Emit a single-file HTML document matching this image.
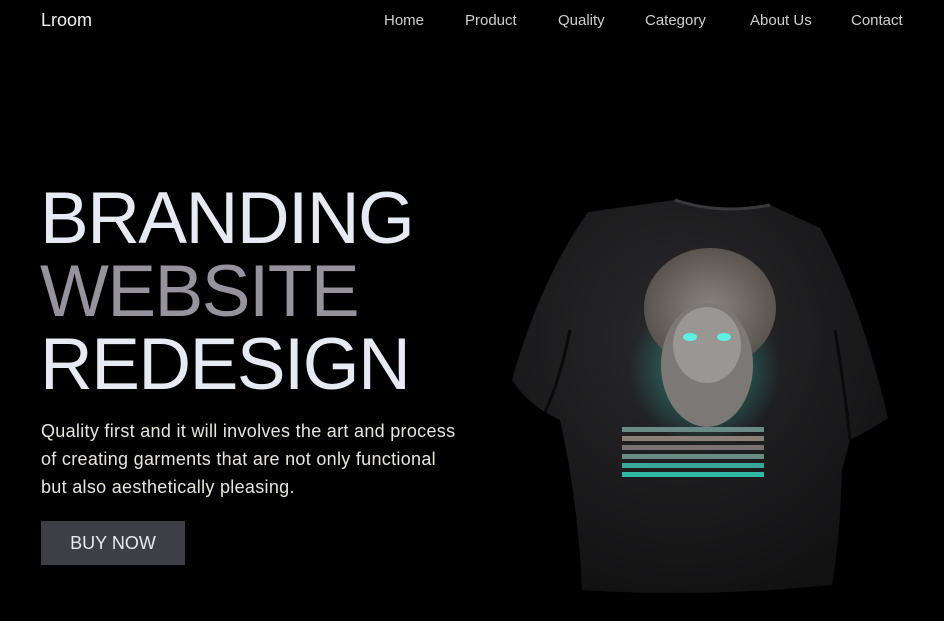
<!DOCTYPE html>
<html><head><meta charset="utf-8"><style>
*{margin:0;padding:0;box-sizing:border-box}
body{width:944px;height:621px;background:#000;overflow:hidden;position:relative;font-family:"Liberation Sans",sans-serif;color:#e4e8f0}
.logo{position:absolute;left:41px;top:10px;font-size:18px;color:#f0f0f0}
.nav{position:absolute;top:12px;font-size:15px;color:#d0d0d0}
h1{position:absolute;left:40px;top:182px;font-weight:normal;font-size:73px;line-height:73px;letter-spacing:-1.5px;color:#e6eaf2}
h1 .g{color:#96939c}
p{position:absolute;left:41px;top:417px;font-size:18px;line-height:28px;color:#e8e6dc;width:500px;letter-spacing:0.3px;white-space:nowrap}
.btn{position:absolute;left:41px;top:521px;width:144px;height:44px;background:#3e3e47;color:#e8e8ee;font-size:18px;text-align:center;line-height:44px}
</style></head><body>
<div class="logo">Lroom</div>
<div class="nav" style="left:384px">Home</div>
<div class="nav" style="left:465px">Product</div>
<div class="nav" style="left:558px">Quality</div>
<div class="nav" style="left:645px">Category</div>
<div class="nav" style="left:750px">About Us</div>
<div class="nav" style="left:851px">Contact</div>
<h1>BRANDING<br><span class="g">WEBSITE</span><br>REDESIGN</h1>
<p>Quality first and it will involves the art and process<br>of creating garments that are not only functional<br>but also aesthetically pleasing.</p>
<div class="btn">BUY NOW</div>
<svg style="position:absolute;left:0;top:0" width="944" height="621">
<defs>
<radialGradient id="sh" cx="0.45" cy="0.35" r="0.7"><stop offset="0" stop-color="#2a2a2c"/><stop offset="1" stop-color="#111112"/></radialGradient>
<radialGradient id="hair" cx="0.5" cy="0.5" r="0.5"><stop offset="0" stop-color="#8a8480"/><stop offset="1" stop-color="#5a5450"/></radialGradient>
<radialGradient id="glow" cx="0.5" cy="0.5" r="0.5"><stop offset="0" stop-color="#2fc8b4" stop-opacity="0.6"/><stop offset="1" stop-color="#2fc8b4" stop-opacity="0"/></radialGradient>
</defs>
<path d="M675 200 Q720 212 770 205 L820 228 Q860 300 888 418 Q870 430 850 440 L842 470 Q840 540 832 585 Q700 598 582 590 Q578 500 560 420 L545 412 Q525 400 512 380 Q540 280 588 212 Z" fill="url(#sh)"/>
<path d="M545 412 Q560 380 570 330" stroke="#0a0a0a" stroke-width="3" fill="none"/>
<path d="M850 440 Q845 390 835 330" stroke="#0a0a0a" stroke-width="3" fill="none"/>
<path d="M675 200 Q720 215 770 205" stroke="#3a3a3c" stroke-width="3" fill="none"/>
<ellipse cx="705" cy="370" rx="75" ry="75" fill="url(#glow)"/>
<ellipse cx="710" cy="308" rx="66" ry="60" fill="url(#hair)"/>
<ellipse cx="707" cy="365" rx="46" ry="62" fill="#7c7876"/>
<ellipse cx="707" cy="345" rx="34" ry="38" fill="#9a9694"/>
<ellipse cx="690" cy="337" rx="7" ry="4" fill="#5ef0e0"/>
<ellipse cx="724" cy="337" rx="7" ry="4" fill="#5ef0e0"/>
<g fill="#6a8a86"><rect x="622" y="427" width="142" height="5"/><rect x="622" y="436" width="142" height="5" fill="#8a8078"/><rect x="622" y="445" width="142" height="5" fill="#7a7270"/><rect x="622" y="454" width="142" height="5"/><rect x="622" y="463" width="142" height="5" fill="#3aa898"/><rect x="622" y="472" width="142" height="5" fill="#2fb8a4"/></g>
</svg>
</body></html>
